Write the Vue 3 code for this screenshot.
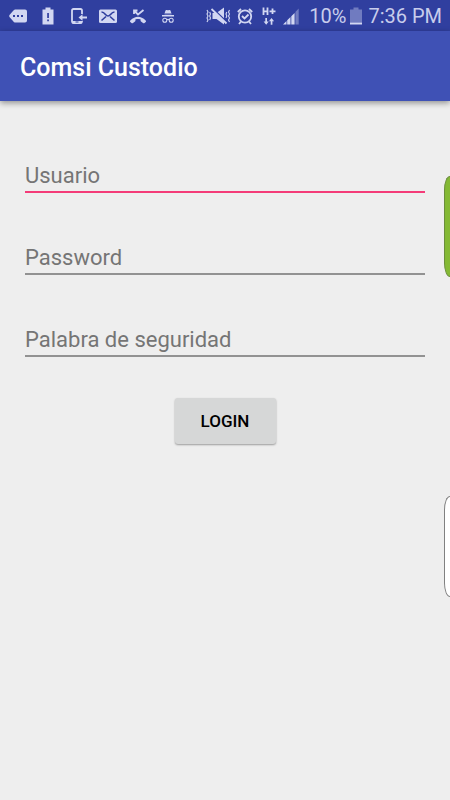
<template>
  <div class="screen">
    <div class="status-bar">
      <div class="notifications">
        <svg class="icon" viewBox="0 0 20 20">
          <path d="M7 3.500h10a2 2 0 0 1 2 2v9a2 2 0 0 1-2 2H7q-1 0-2-1.500L1.500 11q-.7-1 0-2L5 5q1-1.500 2-1.500z" />
          <path class="hole" d="M5 9h2v2H5zM9 9h2v2H9zM13 9h2v2h-2z" />
        </svg>
        <svg class="icon" viewBox="0 0 20 20">
          <path d="M7.500 1.500h5v2h3v15h-11v-15h3z" />
          <path class="hole" d="M9.200 7h1.700v5H9.200zM9.200 13.500h1.700v1.700H9.200z" />
        </svg>
        <svg class="icon" viewBox="0 0 20 20">
          <path class="line" d="M14 8V4.500Q14 3 12.500 3h-7Q4 3 4 4.500v11Q4 17 5.500 17h7q1.500 0 1.500-1.500V15" />
          <path d="M4 15h10v2.500H4z" />
          <path class="hole" d="M7.500 15.500h3v1h-3z" />
          <path d="M10.500 11.500l4-3.300v2.300H19v2h-4.500v2.300z" />
        </svg>
        <svg class="icon" viewBox="0 0 20 20">
          <rect x="1" y="3.500" width="18" height="13.500" rx="1.500" />
          <path class="hole-line" d="M3.500 6q2 0 4 2.500 2.500 3 5 0 2-2.500 4-2.500M3.500 14.500l4.500-4M16.500 14.500l-4.500-4" />
        </svg>
        <svg class="icon" viewBox="0 0 20 20">
          <path class="line" d="M6 8V4.500h3.500M6.500 5l3.500 3.500L15.500 4" />
          <path d="M2.300 14.500Q10 7 17.700 14.500q.8.800 0 1.500L16.500 17q-.7.600-1.500 0l-2-1.500q-.5-.5-.5-1.500v-.7q-2.500-.8-5 0v.7q0 1-.5 1.500L5 17q-.8.600-1.500 0L2.300 16q-.8-.7 0-1.500z" />
        </svg>
        <svg class="icon" viewBox="0 0 20 20">
          <path d="M7.500 4.500q.5-.8 1.500-.4 1 .4 2 0 1-.4 1.500.4l.8 2.500H6.700zM6.500 7.500h7v.8h-7zM4 9h12v1.400H4z" />
          <path class="thin" d="M9 13.700q1-.8 2 0" />
          <circle class="thin" cx="6.800" cy="14.200" r="2" />
          <circle class="thin" cx="13.200" cy="14.200" r="2" />
        </svg>
      </div>
      <div class="system">
        <svg class="icon wide" viewBox="0 0 26 20">
          <path d="M7.500 7h4L19 1.500v17L11.500 13h-4z" />
          <path class="slash" d="M7.500 2.500L22 16.500" />
          <path class="line" d="M6.500 3L21.500 17.500" />
          <path class="thin" d="M2 4l1 2-1 2 1 2-1 2 1 2-1 2M4.700 6l.8 2-.8 2 .8 2-.8 2M24.500 4l-1 2 1 2-1 2 1 2-1 2 1 2M21.800 6l-.8 2 .8 2-.8 2" />
        </svg>
        <svg class="icon" viewBox="0 0 20 20">
          <circle class="line" cx="10" cy="10.500" r="6.200" />
          <path class="line" d="M2.800 6L6 3M14 3l3.200 3M6 15.500l-2 2.500M14 15.500l2 2.500" />
          <path class="line" d="M7 10l2.500 2.500L13.500 8.500" />
        </svg>
        <svg class="icon network" viewBox="0 0 20 20">
          <path class="line" d="M4.500 1.500v7.500M8.500 1.500v7.500M4.500 5.300h4M10.500 5.300h6M13.500 2.500v5.600" />
          <path d="M6.300 12h1.700v3.500h1.700L7.200 18.700 4.600 15.500h1.700zM11.700 18.700V15.200H10l2.500-3.200 2.600 3.200h-1.700v3.500z" />
        </svg>
        <svg class="icon" viewBox="2 0 20 20">
          <path d="M2 18.500l3.500-3.500v3.500zM6.200 18.500v-4.200L9.500 11v7.500zM10.300 18.500v-8.300l3.300-3.300v11.600z" />
          <path class="faint" d="M14.400 18.500V6.100L17.700 2.500v16z" />
        </svg>
        <span class="percent">10%</span>
        <svg class="icon battery" viewBox="0 0 12 20">
          <path class="faint" d="M3.500 1.500h5v2H12v13H0v-13h3.500z" />
          <path d="M0 16.500h12v2H0z" />
        </svg>
        <span class="clock">7:36 PM</span>
      </div>
    </div>
    <header class="app-bar">
      <h1>Comsi Custodio</h1>
    </header>
    <form class="login" @submit.prevent>
      <input
        v-for="field in fields"
        :key="field.name"
        v-model="form[field.name]"
        class="field"
        :class="{ active: active === field.name }"
        :type="field.type"
        :name="field.name"
        :placeholder="field.label"
        :aria-label="field.label"
        @focus="active = field.name"
      />
      <button type="submit" class="submit">LOGIN</button>
    </form>
    <div class="edge-tab green"></div>
    <div class="edge-tab white"></div>
  </div>
</template>

<script setup>
import { reactive, ref } from "vue";

const fields = [
  { name: "usuario", label: "Usuario", type: "text" },
  { name: "password", label: "Password", type: "password" },
  { name: "palabra", label: "Palabra de seguridad", type: "password" },
];

const form = reactive({ usuario: "", password: "", palabra: "" });
const active = ref("usuario");
</script>

<style>
body {
  margin: 0;
  background: #eeeeee;
}
</style>

<style scoped>
.screen {
  position: relative;
  min-height: 100vh;
  overflow: hidden;
  background: #eeeeee;
  font-family: Roboto, "Liberation Sans", sans-serif;
}
.status-bar {
  display: flex;
  justify-content: space-between;
  align-items: center;
  height: 31px;
  padding: 0 8px;
  background: #303f9f;
  color: #c8cdec;
  font-size: 20px;
  line-height: 31px;
  white-space: nowrap;
}
.notifications,
.system {
  display: flex;
  align-items: center;
}
.notifications {
  gap: 10px;
}
.system {
  gap: 4px;
}
.icon {
  display: block;
  flex: none;
  width: 20px;
  height: 20px;
  fill: #d2d7f2;
}
.icon.wide {
  width: 26px;
}
.icon.battery {
  width: 12px;
}
.percent {
  margin-left: 2px;
  padding-top: 2px;
}
.clock {
  margin-left: 2px;
  padding-top: 2px;
}
.hole {
  fill: #303f9f;
}
.hole-line {
  fill: none;
  stroke: #303f9f;
  stroke-width: 1.6;
}
.line {
  fill: none;
  stroke: #d2d7f2;
  stroke-width: 1.8;
}
.thin {
  fill: none;
  stroke: #d2d7f2;
  stroke-width: 1.1;
}
.slash {
  fill: none;
  stroke: #303f9f;
  stroke-width: 2;
}
.faint {
  opacity: 0.4;
}
.app-bar {
  display: flex;
  align-items: center;
  height: 70px;
  padding: 0 20px;
  background: #3f51b5;
  box-shadow: 0 2px 6px rgba(0, 0, 0, 0.4);
}
h1 {
  margin: 0;
  padding-top: 3px;
  color: #ffffff;
  font-size: 25px;
  font-weight: 500;
  line-height: 32px;
}
.login {
  display: flex;
  flex-direction: column;
  align-items: center;
  padding: 57px 25px 24px;
}
.field {
  box-sizing: border-box;
  width: 100%;
  height: 35px;
  margin: 0 0 47px;
  padding: 2px 0 0;
  border: none;
  border-bottom: 2px solid #929292;
  border-radius: 0;
  outline: none;
  background: transparent;
  color: #212121;
  font-family: inherit;
  font-size: 22px;
}
.field::placeholder {
  color: #757575;
  opacity: 1;
}
.field.active {
  border-bottom-color: #f43b78;
}
.field:last-of-type {
  margin-bottom: 41px;
}
.submit {
  min-width: 101px;
  height: 46px;
  padding: 0 24px;
  border: none;
  border-radius: 3px;
  background: #d6d7d7;
  box-shadow: 0 1px 2px rgba(0, 0, 0, 0.35);
  color: #000000;
  font-family: inherit;
  font-size: 17px;
  font-weight: 500;
  cursor: pointer;
}
/* handles peeking in from the right edge */
.edge-tab {
  position: absolute;
  right: 0;
  box-sizing: border-box;
  width: 6px;
  height: 101px;
  border: 1px solid #808080;
  border-right: none;
  border-radius: 6px 0 0 6px / 14px 0 0 14px;
}
.green {
  top: 22%;
  border-color: #6b8e3c;
  background: #84b934;
}
.white {
  top: 62%;
  background: #ffffff;
}
</style>
